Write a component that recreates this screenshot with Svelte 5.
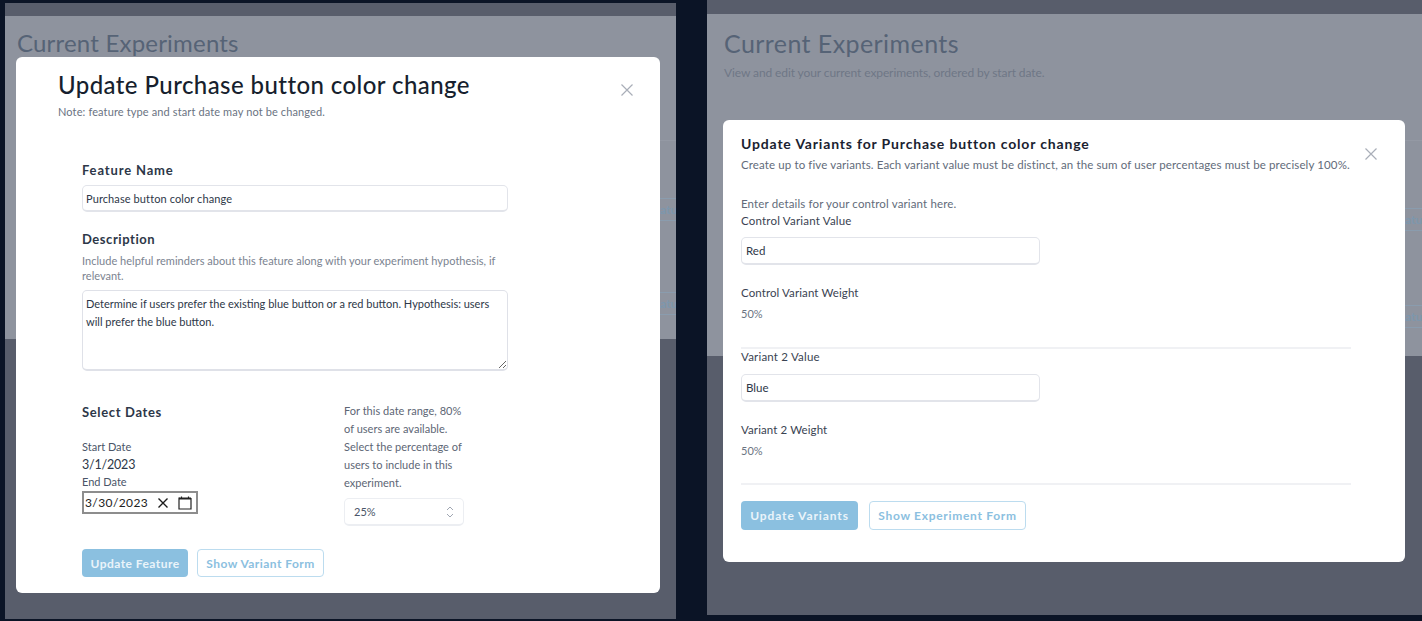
<script>
  const blueText = 'Determine if users prefer the existing blue button or a red button. Hypothesis: users will prefer the blue button.';
</script>

<div class="root">
  <section class="panel left">
    <div class="page">
      <h1>Current Experiments</h1>
      <div class="ghost g1"></div>
      <div class="ghost g2"><span>atu</span></div>
      <div class="ghost g3"><span>atu</span></div>
    </div>
    <div class="modal m1">
      <button class="close" aria-label="Close">
        <svg viewBox="0 0 12 12" width="12" height="12"><path d="M.5.5l11 11M11.500.5l-11 11" /></svg>
      </button>
      <h2 class="big">Update Purchase button color change</h2>
      <p class="note">Note: feature type and start date may not be changed.</p>
      <form class="form">
        <h3 class="name">Feature Name</h3>
        <input class="field name-field" value="Purchase button color change" />
        <h3 class="desc">Description</h3>
        <p class="help">Include helpful reminders about this feature along with your experiment hypothesis, if relevant.</p>
        <textarea class="area">{blueText}</textarea>
        <div class="cols">
          <div class="dates">
            <h3>Select Dates</h3>
            <div class="lab first">Start Date</div>
            <div class="dateval">3/1/2023</div>
            <div class="lab">End Date</div>
            <div class="datebox">
              <span>3/30/2023</span>
              <svg class="x" viewBox="0 0 10 10" width="10" height="10"><path d="M.5.5l9 9M9.500.5l-9 9" /></svg>
              <svg class="cal" viewBox="0 0 14 14" width="14" height="14"><path d="M1 2.500h12v10.500h-12zM1 2.500v-1M3.500 2v-1.500M10.500 2v-1.500" /><path class="thick" d="M1 2.500h12" /></svg>
            </div>
          </div>
          <div class="pct">
            <p>For this date range, 80% of users are available. Select the percentage of users to include in this experiment.</p>
            <div class="select">
              <span>25%</span>
              <svg viewBox="0 0 8 14" width="8" height="14"><path d="M1 5l3-3 3 3M1 9l3 3 3-3" /></svg>
            </div>
          </div>
        </div>
        <div class="actions a1">
          <button type="button" class="btn solid">Update Feature</button>
          <button type="button" class="btn outline">Show Variant Form</button>
        </div>
      </form>
    </div>
  </section>

  <section class="panel right">
    <div class="page">
      <h1>Current Experiments</h1>
      <p class="sub">View and edit your current experiments, ordered by start date.</p>
      <div class="ghost r1"></div>
      <div class="ghost r2"><span>atu</span></div>
      <div class="ghost r3"><span>atu</span></div>
    </div>
    <div class="modal m2">
      <button class="close" aria-label="Close">
        <svg viewBox="0 0 12 12" width="12" height="12"><path d="M.5.5l11 11M11.500.5l-11 11" /></svg>
      </button>
      <h2 class="small">Update Variants for Purchase button color change</h2>
      <p class="lede">Create up to five variants. Each variant value must be distinct, an the sum of user percentages must be precisely 100%.</p>
      <p class="enter">Enter details for your control variant here.</p>
      <div class="vlab">Control Variant Value</div>
      <input class="field vfield" value="Red" />
      <div class="vlab w">Control Variant Weight</div>
      <div class="weight">50%</div>
      <hr />
      <div class="vlab v2">Variant 2 Value</div>
      <input class="field vfield second" value="Blue" />
      <div class="vlab w">Variant 2 Weight</div>
      <div class="weight">50%</div>
      <hr class="last" />
      <div class="actions a2">
        <button type="button" class="btn solid">Update Variants</button>
        <button type="button" class="btn outline">Show Experiment Form</button>
      </div>
    </div>
  </section>
</div>

<style>
  :global(body) { margin: 0; background: #0b1426; }
  .root {
    width: 1422px; height: 621px; overflow: hidden; display: flex;
    background: #0b1426; font-family: Lato, "Noto Sans", sans-serif; color: #1a202c;
  }
  .panel { position: relative; background: #585d6b; overflow: hidden; }
  .left { width: 671px; height: 616px; margin: 3px 31px 0 5px; }
  .right { flex: 1; height: 615px; }
  .page { background: #8e939e; color: #566376; position: relative; overflow: hidden; box-sizing: border-box; }
  .left .page { margin-top: 13px; height: 323px; padding: 11px 12px 0; }
  .right .page { margin-top: 14px; height: 342px; padding: 13px 17px 0; }
  h1 { margin: 0; font-size: 25px; line-height: 32px; font-weight: 400; color: #566376; letter-spacing: .42px; }
  .left h1 { font-size: 24px; letter-spacing: .2px; }
  .sub { margin: 5px 0 0; font-size: 12px; line-height: 18px; color: #6f7786; letter-spacing: -.1px; }
  .ghost { position: absolute; right: 0; height: 23px; box-sizing: border-box; border-top: 1px solid #8a9cae; border-bottom: 1px solid #8a9cae; color: #7d97ad; font-size: 12px; font-weight: 700; line-height: 21px; overflow: hidden; }
  .ghost span { display: block; text-align: right; }
  .left .ghost { left: 655px; }
  .right .ghost { left: 698px; }
  .g1 { top: 124px; height: 1px; border-bottom: 0; border-color: #9499a4; }
  .g2 { top: 182px; }
  .g3 { top: 276px; }
  .r1 { top: 126px; height: 1px; border-bottom: 0; border-color: #9499a4; }
  .r2 { top: 194px; }
  .r3 { top: 291px; }

  .modal { position: absolute; background: #fff; border-radius: 6px; box-sizing: border-box; }
  .m1 { left: 11px; top: 54px; width: 644px; height: 536px; padding: 16px 41px 0 42px; }
  .m2 { left: 16px; top: 120px; width: 682px; height: 442px; padding: 15px 18px 0; }
  .close { position: absolute; border: 0; background: none; padding: 0; display: flex; }
  .close svg path { stroke: #a9aeb8; stroke-width: 1.2; fill: none; }
  .m1 .close { left: 605px; top: 27px; }
  .m2 .close { left: 642px; top: 28px; }

  .big { margin: 0; font-size: 24px; line-height: 24px; font-weight: 500; letter-spacing: .42px; color: #171f2e; white-space: nowrap; }
  .note { margin: 7px 0 0; font-size: 11px; line-height: 15px; color: #6a7382; letter-spacing: .12px; }
  .form { padding: 0 0 0 24px; }
  h3 { margin: 0; font-size: 13px; line-height: 18px; font-weight: 700; letter-spacing: .65px; color: #2d3748; }
  .name { margin-top: 42px; letter-spacing: .85px; }
  .field {
    display: block; box-sizing: border-box; background: #fff; border: 1px solid #e2e4ea; border-bottom-width: 2px;
    font: inherit; color: #2d3748; outline: none;
  }
  .name-field { margin-top: 6px; width: 426px; height: 27px; border-radius: 5px; padding: 0 3px; font-size: 11px; letter-spacing: .1px; }
  .desc { margin-top: 18px; letter-spacing: .55px; }
  .help { margin: 5px 0 0; width: 426px; font-size: 11px; line-height: 15px; color: #7b8390; letter-spacing: .02px; }
  .area {
    display: block; box-sizing: border-box; margin-top: 7px; width: 426px; height: 81px; border: 1px solid #dfe1e8; border-bottom-width: 2px;
    border-radius: 5px; padding: 3.500px 3px; font: inherit; font-size: 11px; line-height: 18px; color: #2d3748; letter-spacing: 0; outline: none; resize: both;
  }
  .cols { display: flex; margin-top: 30px; }
  .dates { width: 262px; }
  .dates h3 { margin-top: 2px; }
  .lab { font-size: 11px; line-height: 15px; color: #4a5568; }
  .first { margin-top: 18px; }
  .dateval { padding-top: 1px; font-size: 12.500px; line-height: 19px; color: #2d3748; letter-spacing: -.2px; }
  .datebox {
    display: flex; align-items: center; box-sizing: border-box; width: 116px; height: 23px; border: 2px solid #8d8d8d;
    margin-top: 2px; padding-left: 1px; font-size: 12px; letter-spacing: .4px; color: #222;
  }
  .datebox span { width: 73px; }
  .x path { stroke: #1c1c1c; stroke-width: 1.4; fill: none; }
  .cal { margin-left: 10px; }
  .cal path { stroke: #222; stroke-width: 1.2; fill: none; }
  .cal .thick { stroke-width: 2; }
  .pct { width: 122px; }
  .pct p { margin: 1px 0 0; font-size: 11px; line-height: 18px; color: #5d6675; letter-spacing: .02px; }
  .select {
    display: flex; align-items: center; justify-content: space-between; box-sizing: border-box; width: 120px; height: 28px;
    margin-top: 6px; border: 1px solid #eceef2; border-bottom-width: 2px; border-radius: 5px; padding: 0 9px; font-size: 11px; color: #4a5568;
  }
  .select svg path { stroke: #a0a6b2; stroke-width: 1; fill: none; }
  .actions { display: flex; }
  .a1 { margin-top: 23px; gap: 9px; }
  .a2 { margin-top: 16px; gap: 11px; }
  .btn { box-sizing: border-box; height: 29px; border-radius: 4px; font: inherit; font-size: 12px; font-weight: 700; padding: 0; }
  .solid { background: #8bc0e0; border: 0; color: #eaf4fa; }
  .outline { background: #fff; border: 1.500px solid #bcdcef; color: #8bc0e0; }
  .a1 .btn { letter-spacing: .45px; height: 28px; }
  .a1 .solid { width: 106px; }
  .a1 .outline { width: 127px; }
  .a2 .solid { width: 117px; letter-spacing: .9px; }
  .a2 .outline { width: 157px; letter-spacing: .7px; }

  .small { margin: 0; font-size: 14px; line-height: 17px; font-weight: 700; letter-spacing: .83px; color: #1a2230; white-space: nowrap; }
  .lede { margin: 4px 0 0; font-size: 11.500px; line-height: 17px; color: #626b7a; white-space: nowrap; letter-spacing: .12px; }
  .enter { margin: 23px 0 0; font-size: 11.500px; line-height: 16px; color: #626b7a; letter-spacing: .14px; }
  .vlab { font-size: 11.500px; line-height: 18px; color: #3a4352; letter-spacing: .2px; }
  .vfield { margin-top: 7px; width: 299px; height: 28px; border-radius: 5px; padding: 0 4px; font-size: 11.500px; }
  .second { margin-top: 8px; }
  .w { margin-top: 19px; letter-spacing: .1px; }
  .weight { margin-top: 2px; font-size: 11px; line-height: 20px; color: #6b7482; }
  hr { margin: 23px 0 0; width: 610px; height: 2px; background: #f0f1f4; border: 0; }
  hr.last { margin-top: 22px; }
  .v2 { margin-top: -1px; }
</style>
